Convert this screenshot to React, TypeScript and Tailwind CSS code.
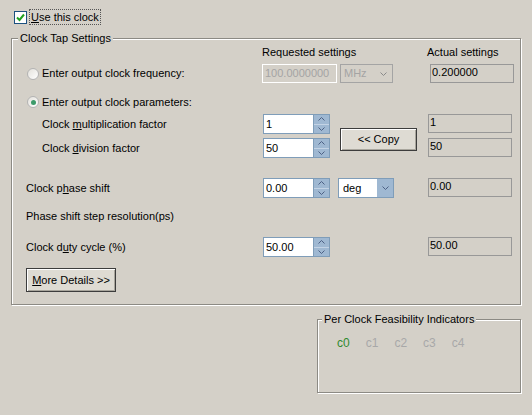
import React from 'react';

const font = { fontFamily: '"Liberation Sans", Arial, sans-serif' };

function Chevron({ color = '#4d6185' }: { color?: string }) {
  return (
    <svg width="7" height="4" viewBox="0 0 7 4">
      <path d="M0.5 0.5 L3.5 3.5 L6.5 0.5" fill="none" stroke={color} strokeWidth="1" />
    </svg>
  );
}

function ChevronUp() {
  return (
    <svg width="7" height="4" viewBox="0 0 7 4">
      <path d="M0.5 3.5 L3.5 0.5 L6.5 3.5" fill="none" stroke="#4d6185" strokeWidth="1" />
    </svg>
  );
}

function Spin({ value }: { value: string }) {
  return (
    <div className="flex h-[20px]">
      <div className="flex h-full w-[51px] items-center border border-[#7f9db9] bg-white pl-[2px] text-black">
        {value}
      </div>
      <div className="flex h-full w-[16px] flex-col border-y border-r border-[#7f9db9]">
        <div className="flex flex-1 items-center justify-center border-b border-[#c3d3e5] bg-[#9fb8d2]">
          <ChevronUp />
        </div>
        <div className="flex flex-1 items-center justify-center bg-[#9fb8d2]">
          <Chevron />
        </div>
      </div>
    </div>
  );
}

function Actual({ value }: { value: string }) {
  return (
    <div className="h-[19px] w-[84px] border border-[#989898] pl-[1px] leading-[14px] text-black">
      {value}
    </div>
  );
}

function Radio({ checked }: { checked?: boolean }) {
  return (
    <div className="flex h-[12px] w-[12px] items-center justify-center rounded-full border border-[#b4b4b4] bg-gradient-to-br from-[#e4e2dc] to-white">
      {checked && <div className="h-[5px] w-[5px] rounded-full bg-[#3d9b6a]" />}
    </div>
  );
}

function Btn({ children, className }: { children: React.ReactNode; className: string }) {
  return (
    <div
      className={`flex items-center justify-center border border-[#3c3c3c] bg-[#dedbd3] text-black shadow-[inset_1px_1px_0_#ffffff,inset_-1px_-1px_0_#a8a59c] ${className}`}
    >
      {children}
    </div>
  );
}

export default function App() {
  return (
    <div className="h-[415px] w-[532px] overflow-hidden bg-[#d4d0c8] text-[11px] text-black" style={font}>
      {/* top checkbox */}
      <div className="flex items-center pl-[14px] pt-[9px]">
        <div className="flex h-[13px] w-[13px] items-center justify-center border border-[#1c5180] bg-white">
          <svg width="9" height="9" viewBox="0 0 9 9">
            <path d="M1 4.5 L3.5 7 L8 1.5" fill="none" stroke="#21a121" strokeWidth="2" />
          </svg>
        </div>
        <div className="ml-[2px] border border-dotted border-[#555] px-[1px] leading-[14px]">
          <span className="underline">U</span>se this clock
        </div>
      </div>

      {/* Clock Tap Settings */}
      <fieldset className="ml-[11px] mt-[6px] h-[274px] w-[510px] border border-[#8c8a84] shadow-[inset_1px_1px_0_#ffffff,1px_1px_0_#ffffff]">
        <legend className="ml-[6px] bg-[#d4d0c8] px-[2px] leading-[14px]">Clock Tap Settings</legend>

        <div className="flex h-[14px] items-center pl-[250px]">
          <div className="w-[165px]">Requested settings</div>
          <div>Actual settings</div>
        </div>

        <div className="mt-[5px] flex h-[19px] items-center">
          <div className="flex w-[250px] items-center pl-[15px]">
            <Radio />
            <span className="ml-[3px]">Enter output clock frequency:</span>
          </div>
          <div className="flex h-[19px] w-[75px] items-center overflow-hidden whitespace-nowrap border border-white pl-[2px] text-[#a4a4a4]">
            100.0000000
          </div>
          <div className="ml-[3px] flex h-[19px] w-[53px] items-center justify-between border border-[#a4a4a4] pl-[3px] pr-[5px] text-[#a4a4a4]">
            MHz
            <Chevron color="#8a8a8a" />
          </div>
          <div className="ml-[37px] self-start">
            <Actual value="0.200000" />
          </div>
        </div>

        <div className="mt-[12px] flex h-[14px] items-center pl-[15px]">
          <Radio checked />
          <span className="ml-[3px]">Enter output clock parameters:</span>
        </div>

        <div className="mt-[5px] flex">
          <div className="flex w-[251px] flex-col pl-[30px]">
            <div className="flex h-[20px] items-center">
              Clock <span className="ml-[3px] underline">m</span>ultiplication factor
            </div>
            <div className="mt-[4px] flex h-[20px] items-center">
              Clock <span className="ml-[3px] underline">d</span>ivision factor
            </div>
          </div>
          <div className="flex flex-col gap-[4px]">
            <Spin value="1" />
            <Spin value="50" />
          </div>
          <div className="ml-[10px] mt-[14px]">
            <Btn className="h-[23px] w-[77px]">&lt;&lt; Copy</Btn>
          </div>
          <div className="ml-[11px] flex flex-col gap-[5px]">
            <Actual value="1" />
            <Actual value="50" />
          </div>
        </div>

        <div className="mt-[20px] flex h-[20px] items-center">
          <div className="w-[251px] pl-[14px]">
            Clock p<span className="underline">h</span>ase shift
          </div>
          <Spin value="0.00" />
          <div className="ml-[8px] flex h-[20px] w-[56px] items-center justify-between border border-[#7f9db9] bg-white pl-[4px]">
            deg
            <div className="flex h-full w-[16px] items-center justify-center bg-[#9fb8d2]">
              <Chevron />
            </div>
          </div>
          <div className="ml-[34px] self-start">
            <Actual value="0.00" />
          </div>
        </div>

        <div className="mt-[11px] flex h-[14px] items-center pl-[14px]">Phase shift step resolution(ps)</div>

        <div className="mt-[14px] flex h-[20px] items-center">
          <div className="w-[251px] pl-[14px]">
            Clock d<span className="underline">u</span>ty cycle (%)
          </div>
          <Spin value="50.00" />
          <div className="ml-[98px] self-start">
            <Actual value="50.00" />
          </div>
        </div>

        <div className="mt-[11px] pl-[14px]">
          <Btn className="h-[24px] w-[90px]">
            <span>
              <span className="underline">M</span>ore Details &gt;&gt;
            </span>
          </Btn>
        </div>
      </fieldset>

      {/* Per Clock Feasibility Indicators */}
      <div className="flex justify-end pr-[11px] pt-[7px]">
        <fieldset className="h-[81px] w-[204px] border border-[#8c8a84] shadow-[inset_1px_1px_0_#ffffff,1px_1px_0_#ffffff]">
          <legend className="ml-[4px] bg-[#d4d0c8] px-[2px] leading-[14px]">Per Clock Feasibility Indicators</legend>
          <div className="flex gap-[16px] pl-[19px] pt-[8px] text-[12px]">
            <span className="text-[#2f8a2f]">c0</span>
            <span className="text-[#a8a8a8]">c1</span>
            <span className="text-[#a8a8a8]">c2</span>
            <span className="text-[#a8a8a8]">c3</span>
            <span className="text-[#a8a8a8]">c4</span>
          </div>
        </fieldset>
      </div>
    </div>
  );
}
